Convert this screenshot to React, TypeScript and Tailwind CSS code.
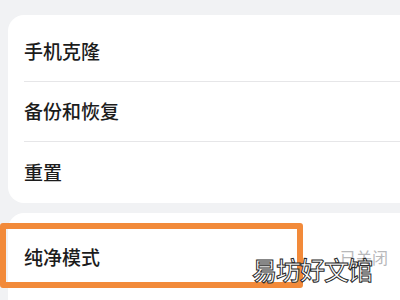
import React from "react";

const font = { fontFamily: '"Noto Sans CJK SC", "Noto Sans", sans-serif' };

function Row({ label, divider = true }: { label: string; divider?: boolean }) {
  return (
    <div className="flex h-[60px] items-center pl-4">
      <div
        className={`flex h-full flex-1 items-center text-[19px] font-medium text-[#1c1c1c] ${
          divider ? "border-b border-[#e6e6e8]" : ""
        }`}
      >
        {label}
      </div>
    </div>
  );
}

export default function App() {
  return (
    <div className="relative h-[300px] w-[400px] overflow-hidden bg-[#f1f2f4]" style={font}>
      <div className="pl-2 pt-[15px]">
        <div className="h-[188px] rounded-tl-[16px] rounded-bl-[16px] bg-white pt-[7px]">
          <Row label="手机克隆" />
          <Row label="备份和恢复" />
          <Row label="重置" divider={false} />
        </div>
        <div className="mt-[10px] flex h-[87px] items-start justify-between rounded-tl-[16px] bg-white pl-4 pr-3 pt-[30px]">
          <span className="text-[19px] font-medium leading-[28px] text-[#1c1c1c]">纯净模式</span>
          <span className="text-[16px] leading-[28px] text-[#b8b8ba]">已关闭</span>
        </div>
      </div>

      <div className="absolute left-0 top-[223px] h-[65px] w-[303px] rounded-[3px] border-[6px] border-[#f28a3a]" />

      <div
        className="absolute left-[252px] top-[251px] text-[25px] font-medium tracking-[-1px] text-white"
        style={{ WebkitTextStroke: "1px #2a2a2a" }}
      >
        易坊好文馆
      </div>
    </div>
  );
}
